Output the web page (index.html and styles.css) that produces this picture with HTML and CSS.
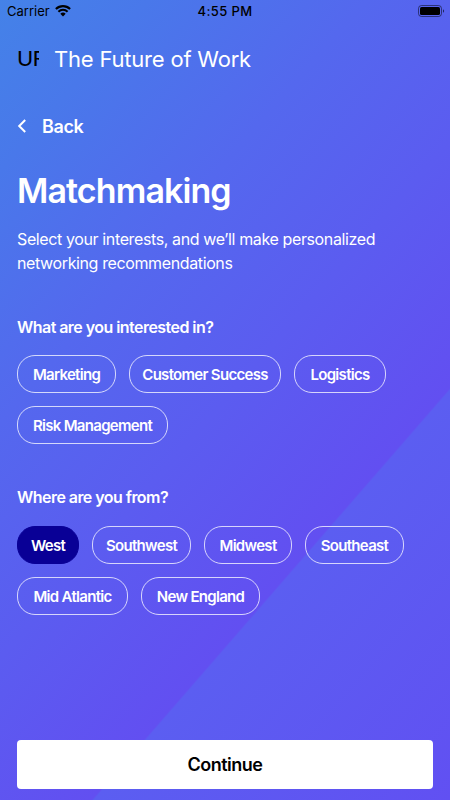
FILE: index.html
```html
<!DOCTYPE html>
<html lang="en">
<head>
  <meta charset="UTF-8" />
  <meta name="viewport" content="width=device-width, initial-scale=1.0"/>
  <title>Matchmaking</title>
  <link rel="stylesheet" href="styles.css">
</head>
<body>

  <!-- STATUS BAR -->
  <div class="status-bar">
    <div class="carrier">
      <span>Carrier</span>
      <svg class="wifi" width="16" height="12" viewBox="0 0 16 12">
        <path d="M0.9 4.1 A10 10 0 0 1 15.1 4.1" fill="none" stroke="#000" stroke-width="2.1"/>
        <path d="M3.4 6.7 A6.6 6.6 0 0 1 12.6 6.7" fill="none" stroke="#000" stroke-width="2"/>
        <path d="M5.3 8.7 A3.9 3.9 0 0 1 10.7 8.7 L8 11.5 Z" fill="#000"/>
      </svg>
    </div>
    <div class="time">4:55 PM</div>
    <svg class="battery" width="27" height="12" viewBox="0 0 27 12">
      <rect x="0.5" y="0.5" width="23" height="11" rx="3" fill="none" stroke="#000" stroke-opacity="0.5"/>
      <rect x="2" y="2" width="20" height="8" rx="1.6" fill="#000"/>
      <path d="M25 4.2 A2 2 0 0 1 25 7.8 Z" fill="#000" fill-opacity="0.6"/>
    </svg>
  </div>

  <header>
    <div class="logo">UR</div>
    <div class="event-name">The Future of Work</div>
  </header>

  <a class="back" href="#">
    <svg width="9" height="14" viewBox="0 0 9 14">
      <path d="M8.2 1 L2.2 7 L8.2 13" fill="none" stroke="#fff" stroke-width="2"/>
    </svg>
    <span>Back</span>
  </a>

  <h1>Matchmaking</h1>
  <p class="intro">Select your interests, and we’ll make personalized<br>networking recommendations</p>

  <!-- INTERESTS -->
  <h2>What are you interested in?</h2>
  <div class="chips">
    <button class="chip marketing">Marketing</button>
    <button class="chip customer">Customer Success</button>
    <button class="chip logistics">Logistics</button>
    <button class="chip risk">Risk Management</button>
  </div>

  <!-- REGIONS -->
  <h2>Where are you from?</h2>
  <div class="chips">
    <button class="chip west selected">West</button>
    <button class="chip southwest">Southwest</button>
    <button class="chip midwest">Midwest</button>
    <button class="chip southeast">Southeast</button>
    <button class="chip atlantic">Mid Atlantic</button>
    <button class="chip england">New England</button>
  </div>

  <button class="continue">Continue</button>

</body>
</html>
```

FILE: styles.css
```css
* {
  box-sizing: border-box;
}
body {
  margin: 0;
  height: 800px;
  padding: 0 17px 11px;
  display: flex;
  flex-direction: column;
  overflow: hidden;
  font-family: Inter, "Liberation Sans", sans-serif;
  color: white;
  background: linear-gradient(131deg, #4482e8 0%, #4978ea 13%, #5468ee 32%, #5b5cf0 50%, #624ff1 68.7%, #5b5ef1 68.9%, #6150f2 100%);
}
.status-bar {
  display: grid;
  grid-template-columns: 1fr auto 1fr;
  align-items: center;
  height: 22px;
  margin: 0 -10px;
  font-size: 13px;
  color: black;
}
.carrier {
  display: flex;
  align-items: center;
  gap: 5px;
}
.time {
  font-weight: 500;
  letter-spacing: 0.4px;
}
.battery {
  justify-self: end;
  margin-right: -2px;
}
header {
  display: flex;
  align-items: center;
  height: 30px;
  margin-top: 22px;
}
.logo {
  width: 22px;
  height: 30px;
  margin-right: 15px;
  overflow: hidden;
  white-space: nowrap;
  font-family: Lato, sans-serif;
  font-size: 22px;
  line-height: 28px;
  letter-spacing: -0.8px;
  color: black;
}
.event-name {
  font-size: 22px;
  letter-spacing: -0.2px;
}
.back {
  display: flex;
  align-items: center;
  gap: 16px;
  height: 24px;
  margin-top: 40px;
  color: white;
  font-size: 18px;
  font-weight: 600;
  letter-spacing: -0.4px;
  text-decoration: none;
}
h1 {
  margin: 31px 0 0;
  font-size: 34px;
  line-height: 44px;
  font-weight: 600;
  letter-spacing: -0.9px;
}
.intro {
  margin: 14px 0 0;
  font-size: 16px;
  line-height: 24px;
  letter-spacing: -0.38px;
}
h2 {
  margin: 42px 0 0;
  font-size: 16px;
  line-height: 20px;
  font-weight: 600;
  letter-spacing: -0.55px;
}
.chips {
  display: flex;
  flex-wrap: wrap;
  gap: 13px;
  margin-top: 18px;
}
.chips + h2 {
  margin-top: 43px;
}
.chips + h2 + .chips {
  margin-top: 19px;
}
.chip {
  height: 38px;
  padding: 0;
  border: 1px solid rgba(255, 255, 255, 0.75);
  border-radius: 18px;
  background: none;
  color: white;
  font-family: inherit;
  font-size: 15px;
  font-weight: 600;
  letter-spacing: -0.7px;
  white-space: nowrap;
}
.chip.selected {
  background: #090096;
  border-color: #090096;
}
.marketing, .southwest, .southeast {
  width: 99px;
}
.customer {
  width: 152px;
}
.logistics {
  width: 92px;
}
.risk {
  width: 151px;
}
.west {
  width: 62px;
}
.midwest {
  width: 88px;
}
.atlantic {
  width: 111px;
}
.england {
  width: 119px;
}
.continue {
  height: 49px;
  margin-top: auto;
  border: none;
  border-radius: 4px;
  background: white;
  color: black;
  font-family: inherit;
  font-size: 18px;
  font-weight: 600;
  letter-spacing: -0.5px;
}
```
